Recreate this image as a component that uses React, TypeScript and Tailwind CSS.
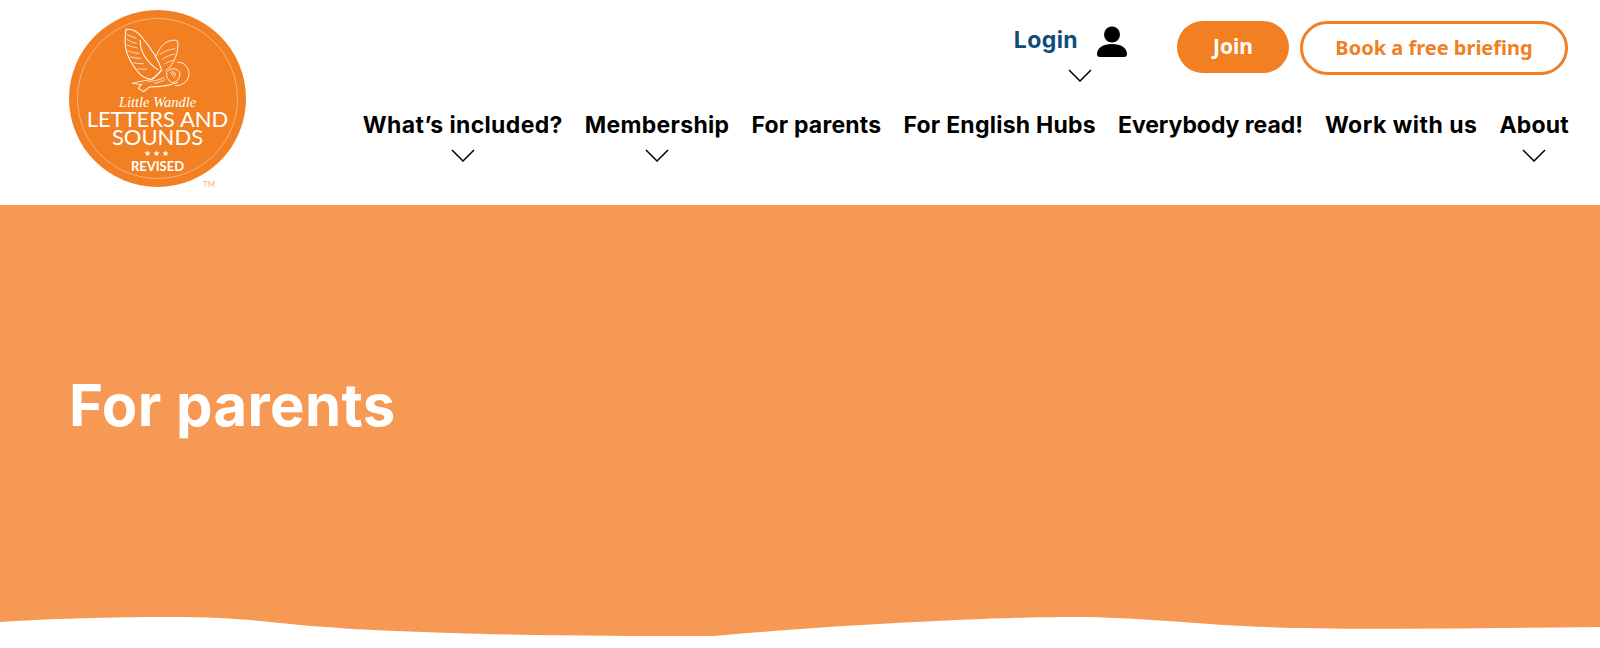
const NAV_LINKS = [
  { label: "What’s included?", sub: true, tracking: "tracking-[0.35px]" },
  { label: "Membership", sub: true, tracking: "tracking-[0.3px]" },
  { label: "For parents", sub: false, tracking: "tracking-[0.2px]" },
  { label: "For English Hubs", sub: false, tracking: "tracking-[0.25px]" },
  { label: "Everybody read!", sub: false, tracking: "tracking-[-0.05px]" },
  { label: "Work with us", sub: false, tracking: "tracking-[0.5px]" },
  { label: "About", sub: true, tracking: "tracking-[0.2px]" },
];

function Chevron() {
  return (
    <svg width="24" height="13" viewBox="0 0 24 13" fill="none" stroke="#000" strokeWidth="1.5">
      <path d="M1 1l11 11L23 1" />
    </svg>
  );
}

function Logo() {
  return (
    <div className="relative w-[177px] h-[177px] rounded-full bg-[#f27f22] flex flex-col items-center text-white font-['Lato',sans-serif]">
      <div className="absolute inset-[8px] rounded-full border border-[#f9b27c]" />
      <svg width="80" height="80" viewBox="0 0 240 240" fill="none" stroke="#fff" strokeWidth="2.6" className="mt-[10px] mb-[-5px] ml-[5px] shrink-0">
        <g transform="translate(125 0) scale(1.19 1) translate(-125 0)">
          {/* left wing */}
          <path d="M35 28c14-2 26 4 36 18 20 28 44 64 54 104-8 10-16 20-25 28-12-2-24-6-33-20C48 132 38 108 34 82c-2-18-1-36 1-54z" />
          <path d="M71 60c-2 30 14 66 46 90" />
          <path d="M38 44c8 4 16 8 24 12M37 58c8 6 16 10 25 12M37 74c9 5 18 8 27 10M40 92c9 5 18 7 28 8M46 110c9 4 18 5 27 5M54 128c9 3 17 3 26 3M64 146c8 2 15 2 24 1" strokeWidth="2" />
          {/* body and feet */}
          <path d="M125 150c-8 12-16 22-25 28-14 3-32 7-50 12 10 2 18 3 24 3l-8 12 14 10 14-14c16 0 34-2 50-6 8-2 16-4 22-7" />
          <path d="M90 184c14 0 30-4 42-12M106 190c10-2 20-6 28-12" strokeWidth="2" />
        </g>
        {/* right wing */}
        <path d="M108 110c8-22 20-38 36-46 10-4 20-5 29-1 2 16 0 34-7 50-6 16-16 30-30 40" />
        <path d="M118 104c14-10 30-16 48-18M126 118c12-8 26-14 40-16M134 132c10-6 20-10 30-12" strokeWidth="2" />
        {/* sun */}
        <path d="M172 127c20-2 35 15 35 34 0 22-20 38-42 36" />
        {/* head */}
        <path d="M140 158c6-10 18-14 28-10 10 4 14 14 10 24-4 10-14 16-22 16-10-4-18-18-16-30z" />
        <path d="M150 158c5-4 12-3 16 1 2 6-2 12-7 16M158 160a3 3 0 1 0 .1 0" strokeWidth="2" />
      </svg>
      <span className="font-['Liberation_Serif',serif] italic text-[14.5px] leading-[14px] whitespace-nowrap">Little Wandle</span>
      <span className="text-[22px] leading-[18px] mt-[1px] whitespace-nowrap">LETTERS AND</span>
      <span className="text-[22px] leading-[18px]">SOUNDS</span>
      <span className="text-[8px] leading-[10px] mt-[2px] tracking-[2px]">★★★</span>
      <span className="text-[13px] leading-[14px] mt-[1px] font-bold">REVISED</span>
      <span className="absolute left-[134px] top-[168px] text-[8px] leading-[12px] text-[#f9b27c]">TM</span>
    </div>
  );
}

export default function App() {
  return (
    <div className="w-[1600px] h-[648px] overflow-hidden bg-white font-['Inter',sans-serif]">
      <header className="h-[205px] flex justify-between pl-[69px] pr-[31px]">
        <div className="pt-[10px]">
          <Logo />
        </div>
        <div className="flex flex-col items-end">
          <div className="flex items-start pt-[21px] mr-[1px]">
            <div className="flex flex-col items-center">
              <div className="flex items-start">
                <span className="text-[23px] leading-[30px] mt-[4px] font-bold tracking-[0.4px] text-[#0d4d78]">Login</span>
                <svg width="32" height="32" viewBox="0 0 32 32" fill="#000" className="ml-[18px] mt-[5px]">
                  <circle cx="16" cy="8.5" r="8" />
                  <path d="M1 28c0-6 6-10 15-10s15 4 15 10c0 2-1 3-3 3H4c-2 0-3-1-3-3z" />
                </svg>
              </div>
              <div className="mt-[11px] ml-[18px]"><Chevron /></div>
            </div>
            <button className="ml-[49px] w-[112px] h-[52px] rounded-[26px] bg-[#f27f22] text-white text-[21px] font-bold font-['Noto_Sans',sans-serif]">Join</button>
            <button className="ml-[11px] w-[268px] h-[54px] rounded-[27px] border-[3px] border-[#f27f22] text-[#f27f22] text-[20px] font-bold font-['Noto_Sans',sans-serif]">Book a free briefing</button>
          </div>
          <nav className="flex gap-[22px] mt-[28px]">
            {NAV_LINKS.map(({ label, sub, tracking }) => (
              <div key={label} className="flex flex-col items-center">
                <span className={`text-[23px] leading-[30px] font-bold text-black whitespace-nowrap ${tracking}`}>{label}</span>
                {sub && <div className="mt-[9px]"><Chevron /></div>}
              </div>
            ))}
          </nav>
        </div>
      </header>
      <section className="relative h-[443px] bg-[#f69954] pl-[69px] pt-[165px]">
        <h1 className="text-[58px] leading-[70px] font-bold tracking-[0.4px] text-white">For parents</h1>
        <svg className="absolute left-0 bottom-0" width="1600" height="40" viewBox="0 0 1600 40" fill="#fff">
          <path d="M0 14C60 10 130 9 170 9c60 0 90 4 130 8 100 9 250 11 414 11C850 16 1000 9 1071 9c79 0 129 9 229 11 100 2 200 0 300-1v21H0z" />
        </svg>
      </section>
    </div>
  );
}
